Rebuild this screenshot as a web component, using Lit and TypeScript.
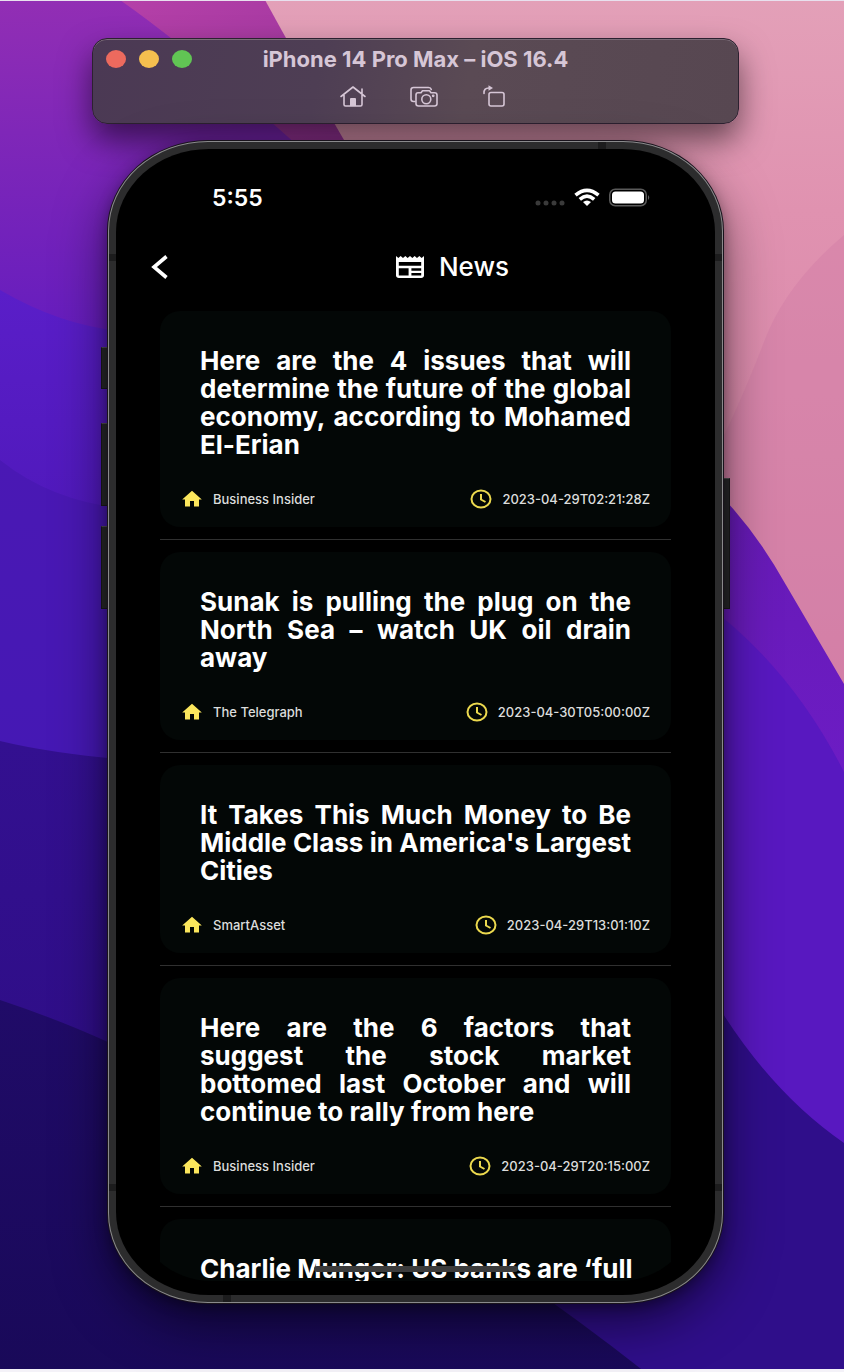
import { LitElement, html, css } from "lit";
import { customElement } from "lit/decorators.js";

interface Article {
  title: string;
  source?: string;
  date?: string;
}

const ARTICLES: Article[] = [
  { title: "Here are the 4 issues that will determine the future of the global economy, according to Mohamed El-Erian", source: "Business Insider", date: "2023-04-29T02:21:28Z" },
  { title: "Sunak is pulling the plug on the North Sea – watch UK oil drain away", source: "The Telegraph", date: "2023-04-30T05:00:00Z" },
  { title: "It Takes This Much Money to Be Middle Class in America's Largest Cities", source: "SmartAsset", date: "2023-04-29T13:01:10Z" },
  { title: "Here are the 6 factors that suggest the stock market bottomed last October and will continue to rally from here", source: "Business Insider", date: "2023-04-29T20:15:00Z" },
  { title: "Charlie Munger: US banks are ‘full" },
];

@customElement("desktop-wallpaper")
class DesktopWallpaper extends LitElement {
  static styles = css`
    :host { display: block; }
    .art { display: block; width: 100%; height: 100%; }
  `;
  render() {
    return html`<svg class="art" viewBox="0 0 844 1372" preserveAspectRatio="none" aria-hidden="true">
      <defs>
        <linearGradient id="a" x1="0" y1="0" x2="0" y2="331" gradientUnits="userSpaceOnUse"><stop offset="0" stop-color="#922eb4"></stop><stop offset=".4" stop-color="#7f27b8"></stop><stop offset="1" stop-color="#661dbe"></stop></linearGradient>
        <linearGradient id="m" x1="0" y1="0" x2="1" y2="1"><stop offset="0" stop-color="#b540a8"></stop><stop offset="1" stop-color="#8f2f98"></stop></linearGradient>
        <linearGradient id="p" x1="0" y1="0" x2="0" y2="1"><stop offset="0" stop-color="#e3a0b8"></stop><stop offset=".3" stop-color="#e092b0"></stop><stop offset="1" stop-color="#d682a8"></stop></linearGradient>
        <linearGradient id="b" x1="0" y1="290" x2="0" y2="510" gradientUnits="userSpaceOnUse"><stop offset="0" stop-color="#5a1ec8"></stop><stop offset="1" stop-color="#5019bc"></stop></linearGradient>
        <linearGradient id="c" x1="0" y1="460" x2="0" y2="760" gradientUnits="userSpaceOnUse"><stop offset="0" stop-color="#4a18b4"></stop><stop offset="1" stop-color="#4518b4"></stop></linearGradient>
        <linearGradient id="d" x1="0" y1="741" x2="0" y2="1043" gradientUnits="userSpaceOnUse"><stop offset="0" stop-color="#331090"></stop><stop offset="1" stop-color="#2f0e88"></stop></linearGradient>
        <linearGradient id="e" x1="0" y1="1000" x2="0" y2="1372" gradientUnits="userSpaceOnUse"><stop offset="0" stop-color="#200b68"></stop><stop offset="1" stop-color="#190959"></stop></linearGradient>
        <linearGradient id="v" x1="0" y1="475" x2="0" y2="772" gradientUnits="userSpaceOnUse"><stop offset="0" stop-color="#661ab4"></stop><stop offset="1" stop-color="#6c1cc4"></stop></linearGradient>
      </defs>
      <rect width="844" height="1372" fill="url(#a)"></rect>
      <path d="M120 0H270L420 240H400Q220 70 120 0Z" fill="url(#m)"></path>
      <path d="M265 0H844V700H700Q440 320 265 0Z" fill="url(#p)"></path>
      <path d="M844 235Q785 285 764 342Q730 430 700 480V700H844Z" fill="#cf7aa6" opacity=".4"></path>
      <path d="M0 290Q60 325 120 331L420 500V1372H0Z" fill="url(#b)"></path>
      <path d="M0 460Q50 500 120 508L420 600V1372H0Z" fill="url(#c)"></path>
      <path d="M700 475Q750 520 786 585L844 684V1372H420V475Z" fill="url(#v)"></path>
      <path d="M700 600Q790 665 844 772V1372H420V600Z" fill="#5818c0"></path>
      <path d="M0 741Q50 753 120 759L420 900V1372H0Z" fill="url(#d)"></path>
      <path d="M700 975Q760 1085 844 1143V1372H420V975Z" fill="#2f0e8a"></path>
      <path d="M0 1000Q60 1020 110 1043Q400 1180 645 1372H0Z" fill="url(#e)"></path>
      <rect width="844" height="1" fill="#e8e0ee"></rect>
      <rect y="1369" width="844" height="3" fill="#f4f2f8"></rect>
    </svg>`;
  }
}

@customElement("simulator-bar")
class SimulatorBar extends LitElement {
  static styles = css`
    :host {
      display: block;
      box-sizing: border-box;
      padding: 8px 13px 14px;
      border: 1px solid #2c2130;
      border-radius: 15px;
      background: linear-gradient(100deg, #4b3954, #4e3e54 35%, #5a4a54 58%, #574751);
      box-shadow: inset 0 1px 0 #7b6c78, 0 16px 32px rgba(0, 0, 0, 0.55);
      color: #d6c6d6;
    }
    .top { display: grid; grid-template-columns: 1fr auto 1fr; align-items: center; height: 24px; }
    .lights { display: flex; gap: 13px; }
    .light { width: 20px; height: 18px; padding: 0; border: 0; border-radius: 50%; }
    .close { background: #ec6a5e; }
    .min { background: #f5bf4f; }
    .max { background: #61c554; }
    .title { margin: 0; font: 700 22px/24px Inter, sans-serif; }
    .tools { display: flex; justify-content: center; gap: 42px; margin-top: 12px; padding-left: 14px; }
    .tool { display: flex; padding: 0; border: 0; background: none; color: inherit; }
  `;
  render() {
    return html`
      <div class="top">
        <div class="lights">
          <button class="light close" aria-label="Close"></button>
          <button class="light min" aria-label="Minimise"></button>
          <button class="light max" aria-label="Zoom"></button>
        </div>
        <h1 class="title">iPhone 14 Pro Max – iOS 16.4</h1>
      </div>
      <div class="tools">
        <button class="tool" aria-label="Home"><svg width="28" height="26" viewBox="0 0 28 26" fill="none" stroke="currentColor" stroke-width="1.6" stroke-linecap="round" stroke-linejoin="round"><path d="M2 13.500L14 4L26 13.500M5 12V21.500Q5 23 6.500 23H21.500Q23 23 23 21.500V12M23 10.500V6"></path><path d="M11 23V16Q11 15 12 15H16Q17 15 17 16V23Z" fill="currentColor" stroke="none"></path></svg></button>
        <button class="tool" aria-label="Screenshot"><svg width="30" height="26" viewBox="0 0 30 26" fill="none" stroke="currentColor" stroke-width="1.6" stroke-linecap="round" stroke-linejoin="round"><path d="M6 18.500H4.500Q2 18.500 2 16V7Q2 4.500 4.500 4.500H19.500Q21.800 4.500 22.300 6.500"></path><path d="M9 9.800H12L13.500 7.800H20.500L22 9.800H25.500Q28 9.800 28 12V20.800Q28 23 25.500 23H9.500Q7 23 7 20.800V12Q7 9.800 9 9.800Z"></path><circle cx="17.300" cy="16.200" r="4.500"></circle><circle cx="24.200" cy="12.800" r=".6" fill="currentColor"></circle></svg></button>
        <button class="tool" aria-label="Rotate"><svg width="26" height="26" viewBox="0 0 26 26" fill="none" stroke="currentColor" stroke-width="1.6" stroke-linecap="round" stroke-linejoin="round"><rect x="8" y="9.500" width="15" height="13.500" rx="2"></rect><path d="M3 10.500Q2.500 5 8 5"></path><path d="M7.500 2.300L12 5L7.500 7.700Z" fill="currentColor" stroke="none"></path></svg></button>
      </div>`;
  }
}

@customElement("news-card")
class NewsCard extends LitElement {
  static properties = { article: { attribute: false } };
  declare article: Article;
  static styles = css`
    :host { display: block; padding: 36px 20px 14px; border-radius: 20px; background: #030706; }
    .title { margin: 0 20px 26px; font: 700 26px/28px Inter, sans-serif; color: #fff; text-align: justify; }
    .single { white-space: nowrap; }
    .meta { display: flex; justify-content: space-between; padding-right: 1px; }
    .item { display: flex; align-items: center; gap: 10px; font: 500 13px/28px Inter, sans-serif; color: #dcdddc; }
    .home { color: #fbe65c; }
    .clock { color: #ecd94e; }
  `;
  render() {
    const a = this.article;
    if (!a.source) return html`<h3 class="title single">${a.title}</h3>`;
    return html`
      <h3 class="title">${a.title}</h3>
      <div class="meta">
        <span class="item"><svg class="home" width="23" height="20" viewBox="0 0 23 20" fill="currentColor"><path d="M12 1.800L21.800 10.500H19V17.500H14V12H10V17.500H5V10.500H2.200Z"></path></svg>${a.source}</span>
        <time class="item" datetime=${a.date}><svg class="clock" width="22" height="20" viewBox="0 0 22 20" fill="none" stroke="currentColor" stroke-width="2"><ellipse cx="11" cy="10" rx="9.500" ry="8.500"></ellipse><path d="M11 5V10.500L15.500 13"></path></svg>${a.date}</time>
      </div>`;
  }
}

@customElement("phone-frame")
class PhoneFrame extends LitElement {
  static styles = css`
    :host { display: block; position: relative; box-sizing: border-box; }
    .key { position: absolute; width: 8px; box-sizing: border-box; background: #2b2b2d; border: 1px solid #1b1b1c; border-top-color: #555; }
    .mute { left: -7px; top: 206px; height: 42px; }
    .up { left: -7px; top: 282px; height: 83px; }
    .down { left: -7px; top: 385px; height: 83px; }
    .side { right: -7px; top: 337px; height: 131px; }
    .shell {
      position: relative;
      box-sizing: border-box;
      height: 100%;
      padding: 7px;
      border: 1px solid #8a8a8c;
      border-radius: 100px / 90px;
      background: #2c2c2d;
      box-shadow: 0 0 0 1px #19131c, 0 20px 52px rgba(0, 0, 0, 0.55), 0 4px 14px rgba(0, 0, 0, 0.35);
    }
    .band { position: absolute; background: #1c1c1d; }
    .b1 { right: 116px; top: 0; width: 8px; height: 7px; }
    .b2 { left: 0; top: 112px; width: 7px; height: 7px; }
    .b3 { right: 0; top: 112px; width: 7px; height: 7px; }
    .b4 { left: 0; bottom: 111px; width: 7px; height: 7px; }
    .b5 { right: 0; bottom: 111px; width: 7px; height: 7px; }
    .b6 { left: 114px; bottom: 0; width: 8px; height: 7px; }
    .glass { box-sizing: border-box; height: 100%; padding: 21px 20px 14px; border-radius: 93px / 83px; background: #000; overflow: hidden; }
    .screen { position: relative; height: 100%; overflow: hidden; border-radius: 76px / 70px; }
    .indicator { position: absolute; left: 50%; bottom: 9px; width: 204px; height: 6px; margin-left: -102px; border-radius: 3px; background: #3b3b3b; }
  `;
  render() {
    return html`
      <div class="key mute"></div><div class="key up"></div><div class="key down"></div><div class="key side"></div>
      <div class="shell">
        <div class="band b1"></div><div class="band b2"></div><div class="band b3"></div>
        <div class="band b4"></div><div class="band b5"></div><div class="band b6"></div>
        <div class="glass"><div class="screen"><slot></slot><div class="indicator"></div></div></div>
      </div>`;
  }
}

@customElement("app-root")
class AppRoot extends LitElement {
  static styles = css`
    :host { display: block; }
    .desk { position: relative; box-sizing: border-box; display: flex; flex-direction: column; gap: 17px; height: 100vh; overflow: hidden; padding: 38px 105px 69px 92px; }
    .wall { position: absolute; inset: 0; }
    .bar { position: relative; flex: none; }
    .phone { flex: 1; min-height: 0; margin: 0 16px; }
    .status { display: flex; justify-content: space-between; align-items: center; height: 24px; padding: 16px 44px 0 76px; color: #fff; }
    .time { font: 600 23px/24px Inter, sans-serif; }
    .signals { display: flex; align-items: center; gap: 9px; }
    .nav { display: grid; grid-template-columns: 40px 1fr 40px; align-items: center; height: 40px; margin-top: 37px; color: #fff; }
    .back { display: flex; padding: 0 0 0 15px; border: 0; background: none; color: inherit; }
    .heading { display: flex; justify-content: center; align-items: center; gap: 15px; margin: 0; padding-left: 74px; font: 500 26px/40px Inter, sans-serif; }
    .list { display: flex; flex-direction: column; gap: 12px; padding: 24px 24px 0; }
    .rule { width: 100%; height: 1px; margin: 0; border: 0; background: #303030; }
  `;
  render() {
    return html`
      <div class="desk">
        <desktop-wallpaper class="wall"></desktop-wallpaper>
        <simulator-bar class="bar"></simulator-bar>
        <phone-frame class="phone">
          <div class="status">
            <span class="time">5:55</span>
            <span class="signals">
              <svg width="31" height="20" viewBox="0 0 31 20" fill="#3a3a3a"><circle cx="4" cy="15" r="2.500"></circle><circle cx="12" cy="15" r="2.500"></circle><circle cx="20" cy="15" r="2.500"></circle><circle cx="28" cy="15" r="2.500"></circle></svg>
              <svg width="26" height="20" viewBox="0 0 26 20" fill="none" stroke="#fff" stroke-width="3.600"><path d="M1.500 7.200Q13-2.600 24.500 7.200M5.800 11.300Q13 5 20.200 11.300"></path><path d="M13 18L9 14Q13 11 17 14Z" fill="#fff" stroke="none"></path></svg>
              <svg width="42" height="20" viewBox="0 0 42 20"><rect x=".75" y="1.250" width="36.500" height="16.500" rx="5.500" fill="none" stroke="#5a5a5a" stroke-width="1.500"></rect><rect x="3" y="3.500" width="32" height="12" rx="3.500" fill="#fff"></rect><path d="M39 7Q41.500 9.500 39 12Z" fill="#5a5a5a"></path></svg>
            </span>
          </div>
          <nav class="nav">
            <button class="back" aria-label="Back"><svg width="18" height="26" viewBox="0 0 18 26" fill="none" stroke="#fff" stroke-width="3.600"><path d="M15.500 2.500L3 13L15.500 23.500"></path></svg></button>
            <h2 class="heading"><svg width="28" height="22" viewBox="2 3 20 18" preserveAspectRatio="none" fill="#fff"><path d="M22 3l-1.670 1.670L18.670 3 17 4.670 15.330 3l-1.660 1.670L12 3l-1.670 1.670L8.670 3 7 4.670 5.330 3 3.670 4.670 2 3v16c0 1.100.9 2 2 2h16c1.100 0 2-.9 2-2V3zM11 19H4v-6h7v6zm9 0h-7v-2h7v2zm0-4h-7v-2h7v2zm0-4H4V8h16v3z"></path></svg>News</h2>
          </nav>
          <div class="list">
            ${ARTICLES.map((a, i) => html`${i ? html`<hr class="rule" />` : ""}<news-card .article=${a}></news-card>`)}
          </div>
        </phone-frame>
      </div>`;
  }
}
